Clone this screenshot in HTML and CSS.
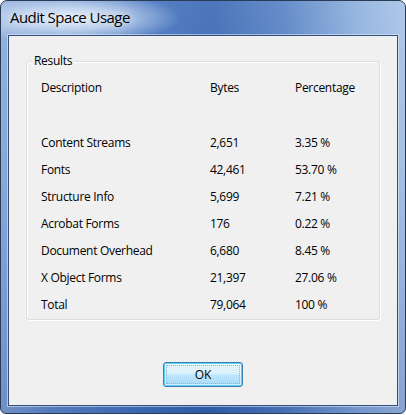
FILE: index.html
```html
<!DOCTYPE html>
<html>
<head>
<meta charset="utf-8">
<title>Audit Space Usage</title>
<link rel="stylesheet" href="styles.css">
</head>
<body>
<div class="window">
  <div class="titlebar"><span class="title">Audit Space Usage</span></div>
  <div class="client">
    <div class="group">
      <span class="legend">Results</span>
      <div class="table">
        <div class="row head"><span>Description</span><span>Bytes</span><span>Percentage</span></div>
        <div class="row"><span>Content Streams</span><span>2,651</span><span>3.35 %</span></div>
        <div class="row"><span>Fonts</span><span>42,461</span><span>53.70 %</span></div>
        <div class="row"><span>Structure Info</span><span>5,699</span><span>7.21 %</span></div>
        <div class="row"><span>Acrobat Forms</span><span>176</span><span>0.22 %</span></div>
        <div class="row"><span>Document Overhead</span><span>6,680</span><span>8.45 %</span></div>
        <div class="row"><span>X Object Forms</span><span>21,397</span><span>27.06 %</span></div>
        <div class="row"><span>Total</span><span>79,064</span><span>100 %</span></div>
      </div>
    </div>
    <div class="buttons">
      <button class="btn"><span class="focus">OK</span></button>
    </div>
  </div>
</div>
</body>
</html>
```

FILE: styles.css
```css
html, body {
  margin: 0;
  padding: 0;
  background: #ffffff;
}
body {
  width: 406px;
  height: 415px;
  overflow: hidden;
  font-family: "Open Sans", "Noto Sans", sans-serif;
  font-size: 12px;
  color: #000;
}
.window {
  box-sizing: border-box;
  width: 406px;
  height: 414px;
  border: 1px solid #2a3b57;
  border-radius: 7px 7px 6px 6px;
  background:
    radial-gradient(ellipse 110px 26px at 70px 17px, rgba(235,242,252,0.95) 0%, rgba(220,232,248,0.7) 45%, rgba(200,220,245,0) 100%),
    linear-gradient(180deg, rgba(255,255,255,0.1) 0%, rgba(255,255,255,0) 40%, rgba(0,30,110,0.18) 100%),
    linear-gradient(90deg, #8aabd9 0%, #6690cd 12%, #4675bf 35%, #3867b3 52%, #5681c3 70%, #8cafdd 88%, #a6c1e6 100%);
  display: flex;
  flex-direction: column;
  padding: 0 7px 7px 7px;
}
.titlebar {
  height: 34px;
  display: flex;
  align-items: center;
  padding-left: 2px;
  padding-bottom: 2px;
  box-sizing: border-box;
}
.title {
  font-family: "Open Sans", "Noto Sans", sans-serif;
  font-size: 15px;
  letter-spacing: -0.55px;
  color: #000;
  text-shadow: 0 0 8px rgba(255,255,255,0.9);
}
.client {
  flex: 1;
  background: #f0f0f0;
  border: 1px solid #34507a;
  box-shadow: 0 0 0 1px rgba(230,240,252,0.55);
  display: flex;
  flex-direction: column;
}
.group {
  position: relative;
  margin: 25px 17px 0 17px;
  height: 259px;
  box-sizing: border-box;
  border: 1px solid #d5dfe5;
  border-radius: 3px;
  box-shadow: inset 1px 1px 0 #ffffff, 1px 1px 0 #ffffff;
}
.legend {
  position: absolute;
  left: 5px;
  top: -9px;
  padding: 0 2px;
  background: #f0f0f0;
  line-height: 16px;
  letter-spacing: -0.3px;
}
.table {
  padding: 12px 0 0 14px;
  display: flex;
  flex-direction: column;
}
.row {
  display: grid;
  grid-template-columns: 169px 85px 1fr;
  height: 27px;
  align-items: center;
  letter-spacing: -0.3px;
}
.row.head {
  margin-bottom: 28px;
}
.buttons {
  display: flex;
  justify-content: center;
  padding-top: 42px;
}
.btn {
  width: 80px;
  height: 25px;
  padding: 2px;
  box-sizing: border-box;
  border: 1px solid #3c7fb1;
  border-radius: 3px;
  background: linear-gradient(180deg, #e5f4fc 0%, #d9f0fc 48%, #bee6fd 52%, #a7d9f5 100%);
  box-shadow: inset 0 0 0 1px #59d0f8, inset 0 0 0 2px rgba(255,255,255,0.5);
  font-family: "Open Sans", "Noto Sans", sans-serif;
  font-size: 12px;
  color: #000;
  display: flex;
}
.focus {
  flex: 1;
  display: flex;
  align-items: center;
  justify-content: center;
  border: 1px dotted #7fb8d8;
  line-height: 16px;
}
```
